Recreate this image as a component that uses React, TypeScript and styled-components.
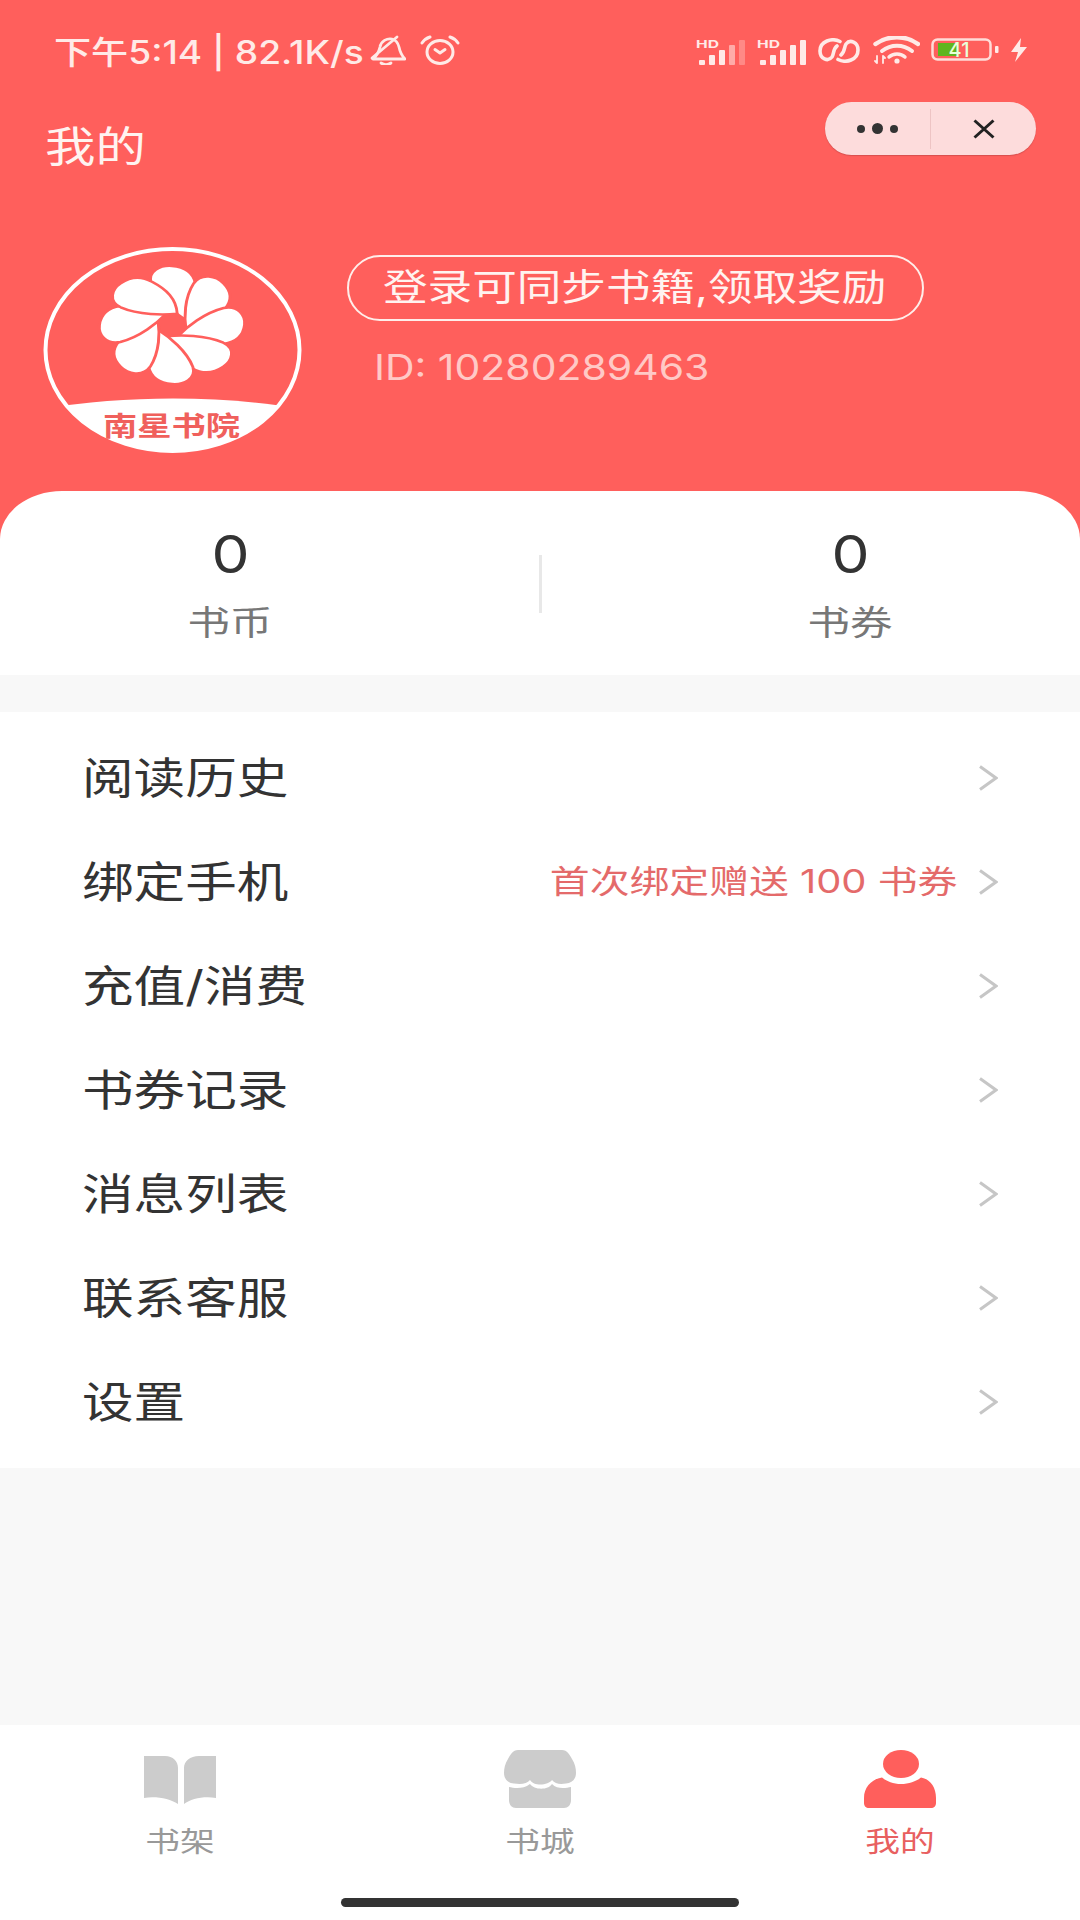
import React from 'react';
import styled, { createGlobalStyle } from 'styled-components';

const RED = '#ff5f5c';
const CJK = `"Noto Sans CJK SC", "Noto Sans", sans-serif`;
const LATIN_CJK = `Inter, "Noto Sans CJK SC", sans-serif`;

const GlobalStyle = createGlobalStyle`
  html, body {
    margin: 0;
    padding: 0;
    background: #f8f8f8;
  }
  * {
    box-sizing: border-box;
  }
`;

const Page = styled.div`
  width: 1080px;
  height: 1920px;
  display: flex;
  flex-direction: column;
  background: #f8f8f8;
  overflow: hidden;
  font-family: ${CJK};
`;

const Hero = styled.header`
  background: ${RED};
  display: flex;
  flex-direction: column;
`;

const StatusBar = styled.div`
  height: 100px;
  padding: 0 52px 0 54px;
  display: flex;
  align-items: center;
  justify-content: space-between;
`;

const StatusGroup = styled.div<{ $gap: number }>`
  display: flex;
  align-items: center;
  gap: ${p => p.$gap}px;
`;

const StatusText = styled.span`
  display: inline-block;
  width: 302px;
  font-family: ${LATIN_CJK};
  font-size: 32px;
  font-weight: 500;
  color: #ffeae7;
  white-space: nowrap;
  transform: scaleX(1.16);
  transform-origin: left center;
`;

const NavBar = styled.div`
  height: 92px;
  padding: 0 44px 0 45px;
  display: flex;
  justify-content: space-between;
`;

const NavTitle = styled.h1`
  margin: 0;
  height: 88px;
  line-height: 88px;
  font-size: 42px;
  font-weight: 400;
  color: #fff3f0;
  transform: scaleX(1.2);
  transform-origin: left center;
`;

const Capsule = styled.div`
  margin-top: 2px;
  width: 211px;
  height: 53px;
  border-radius: 27px;
  background: #fddcdc;
  box-shadow: 0 1px 1px rgba(190, 70, 70, 0.6);
  display: grid;
  grid-template-columns: 105px 1px 1fr;
  align-items: center;
  justify-items: center;
`;

const CapsuleLine = styled.span`
  width: 1px;
  height: 40px;
  background: #eec4c4;
`;

const Dots = styled.span`
  display: flex;
  align-items: center;
  gap: 7px;
`;

const Dot = styled.i<{ $size: number }>`
  width: ${p => p.$size}px;
  height: ${p => p.$size}px;
  border-radius: 50%;
  background: #333;
`;

const Profile = styled.section`
  margin-top: 55px;
  padding: 0 0 38px 43px;
  display: flex;
  align-items: flex-start;
  gap: 45px;
`;

const ProfileInfo = styled.div`
  padding-top: 8px;
  display: flex;
  flex-direction: column;
  align-items: flex-start;
`;

const LoginPill = styled.button`
  width: 577px;
  height: 66px;
  padding: 0 0 0 34px;
  border: 2px solid #ffeeea;
  border-radius: 33px;
  background: transparent;
  text-align: left;
  font-family: ${LATIN_CJK};
  font-size: 37px;
  line-height: 60px;
  color: #fff3f0;
  white-space: nowrap;
`;

const PillText = styled.span`
  display: inline-block;
  transform: scaleX(1.205);
  transform-origin: left center;
`;

const UserId = styled.span`
  margin: 24px 0 0 27px;
  font-family: Inter, sans-serif;
  font-size: 35px;
  line-height: 44px;
  color: #ffc9c6;
  white-space: nowrap;
  transform: scaleX(1.17);
  transform-origin: left center;
`;

const StatsCard = styled.section`
  height: 184px;
  padding-top: 32px;
  border-radius: 62px 62px 0 0 / 48px 48px 0 0;
  background: #fff;
  display: grid;
  grid-template-columns: 460px 1fr 460px;
  justify-items: center;
  align-items: start;
`;

const Stat = styled.div`
  display: flex;
  flex-direction: column;
  align-items: center;
`;

const StatValue = styled.span`
  font-family: Inter, sans-serif;
  font-size: 52px;
  line-height: 64px;
  color: #333;
  transform: scaleX(1.16);
`;

const StatLabel = styled.span`
  margin-top: 12px;
  font-size: 34px;
  line-height: 44px;
  color: #777;
  transform: scaleX(1.25);
`;

const StatLine = styled.span`
  margin-top: 32px;
  width: 3px;
  height: 58px;
  background: #e8e8e8;
`;

const Menu = styled.ul`
  margin: 37px 0 0;
  padding: 14px 82px 14px 82px;
  list-style: none;
  background: #fff;
`;

const MenuRow = styled.li`
  height: 104px;
  display: flex;
  align-items: center;
  gap: 22px;
`;

const MenuLabel = styled.span`
  flex: 1;
  font-family: ${LATIN_CJK};
  font-size: 43px;
  line-height: 60px;
  color: #333;
  white-space: nowrap;
  transform: scaleX(1.2);
  transform-origin: left center;
`;

const MenuHint = styled.span`
  font-family: ${LATIN_CJK};
  font-size: 32px;
  line-height: 44px;
  color: #e46a6a;
  white-space: nowrap;
  transform: scaleX(1.245);
  transform-origin: right center;
`;

const Filler = styled.div`
  flex: 1;
`;

const TabBar = styled.nav`
  height: 195px;
  padding-top: 25px;
  background: #fff;
  display: flex;
  flex-direction: column;
  align-items: center;
`;

const TabRow = styled.div`
  width: 100%;
  display: grid;
  grid-template-columns: repeat(3, 1fr);
`;

const Tab = styled.div`
  display: flex;
  flex-direction: column;
  align-items: center;
`;

const TabIcon = styled.div`
  height: 58px;
  display: flex;
  align-items: flex-end;
`;

const TabLabel = styled.span<{ $active?: boolean }>`
  margin-top: 14px;
  font-size: 28px;
  line-height: 36px;
  color: ${p => (p.$active ? '#e86060' : '#999')};
  transform: scaleX(1.24);
`;

const HomeBar = styled.div`
  margin-top: 40px;
  width: 398px;
  height: 9px;
  border-radius: 5px;
  background: #333;
`;

const Signal = ({ faded }: { faded?: boolean }) => (
  <svg width="50" height="30" viewBox="0 -4 50 30">
    <text x="0" y="9" fontFamily="Inter, sans-serif" fontSize="11" fontWeight="700" fill="#ffeae7" textLength="23" lengthAdjust="spacingAndGlyphs">HD</text>
    <rect x="3" y="21" width="6" height="5" rx="1" fill="#ffeae7" />
    <rect x="13" y="16" width="6" height="10" rx="1" fill="#ffeae7" />
    <rect x="23" y="11" width="6" height="15" rx="1" fill="#ffeae7" />
    <rect x="33" y="6" width="6" height="20" rx="1" fill="#ffeae7" opacity={faded ? 0.55 : 1} />
    <rect x="43" y="1" width="6" height="25" rx="1" fill="#ffeae7" opacity={faded ? 0.3 : 1} />
  </svg>
);

const LinkIcon = () => (
  <svg width="42" height="25" viewBox="0 0 42 25" fill="none" stroke="#ffeae7" strokeWidth="3.6" strokeLinecap="round">
    <path d="M22 3.5C14 -0.5 2 3 2 13C2 21 10 24 14 19C16 16 15 11 19 8" />
    <path d="M20 21.5C28 25.5 40 22 40 12C40 4 32 1 28 6C26 9 27 14 23 17" />
  </svg>
);

const WifiIcon = () => (
  <svg width="49" height="28" viewBox="-3 0 49 28" fill="none" stroke="#ffeae7" strokeLinecap="round">
    <path d="M1.5 8C14 -1 32 -1 44 8" strokeWidth="4.4" />
    <path d="M8 15C17 8 29 8 38 15" strokeWidth="4" />
    <path d="M15 21C19 17 27 17 31 21" strokeWidth="3.4" />
    <circle cx="23" cy="25" r="2.6" fill="#ffeae7" stroke="none" />
    <path d="M3 20V27M1 25L3 27M9 27V20M9 20L11 22" strokeWidth="1.8" />
  </svg>
);

const Battery = () => (
  <svg width="68" height="24" viewBox="0 0 68 24">
    <rect x="1.5" y="1.5" width="58" height="20" rx="5" fill="none" stroke="#ffdcd8" strokeWidth="2.5" />
    <rect x="7" y="5" width="20" height="13" fill="#5fb51f" />
    <rect x="64" y="8" width="3.5" height="7" rx="1" fill="#ffeae7" />
    <text x="28" y="19" textAnchor="middle" fontFamily="Inter, sans-serif" fontSize="20" fontWeight="500" fill="#e9ffd8">41</text>
  </svg>
);

const Bolt = () => (
  <svg width="18" height="24" viewBox="0 0 18 24">
    <path d="M11 0L1 14H8L5 24L17 9H10Z" fill="#ffeae7" />
  </svg>
);

const MutedBell = () => (
  <svg width="36" height="30" viewBox="0 0 36 30" fill="none" stroke="#ffeae7" strokeWidth="2.8" strokeLinecap="round" strokeLinejoin="round">
    <path d="M3 24C8 20 9 16 10 12C11 6 17 3 22 4C26 5 28 8 29 12C30 17 32 21 35 24H3" />
    <path d="M2 23L27 2" />
    <path d="M11 28C14 30 18 30 21 28" />
  </svg>
);

const AlarmClock = () => (
  <svg width="40" height="30" viewBox="0 0 40 30" fill="none" stroke="#ffeae7" strokeWidth="3" strokeLinecap="round" strokeLinejoin="round">
    <ellipse cx="20" cy="17" rx="13" ry="11.5" />
    <path d="M15 14.5L20 18L25 14.5" />
    <path d="M2 8C4 5 7 3 10 2" />
    <path d="M38 8C36 5 33 3 30 2" />
  </svg>
);

const Close = () => (
  <svg width="24" height="24" viewBox="0 0 24 24" fill="none" stroke="#222" strokeWidth="3">
    <path d="M2.5 3.5L21.5 20.5M21.5 3.5L2.5 20.5" />
  </svg>
);

const Chevron = () => (
  <svg width="19" height="26" viewBox="0 0 19 26" fill="none" stroke="#c6c6c6" strokeWidth="3">
    <path d="M1 1.5L17 13L1 24.5" />
  </svg>
);

const PETALS = [0, 45, 90, 135, 180, 225, 270, 315];

const Logo = () => (
  <svg width="259" height="206" viewBox="0 0 259 206">
    <defs>
      <clipPath id="logoClip">
        <ellipse cx="129.5" cy="103" rx="127" ry="101" />
      </clipPath>
    </defs>
    <ellipse cx="129.5" cy="103" rx="127" ry="101" fill={RED} stroke="#fff" strokeWidth="4" />
    <g transform="translate(129 78) scale(1.23 1)">
      {PETALS.map(a => (
        <path
          key={a}
          transform={`rotate(${a})`}
          d="M11 -5C2 -12 -12 -26 -17 -42C-20 -54 -9 -60 0 -59C10 -58 17 -53 19 -42C22 -28 21 -16 11 -5Z"
          fill="#fff"
          stroke={RED}
          strokeWidth="2.4"
        />
      ))}
    </g>
    <path d="M0 162C80 148 180 148 259 162V206H0Z" fill="#fff" clipPath="url(#logoClip)" />
    <text
      x="60"
      y="189"
      textLength="137"
      lengthAdjust="spacingAndGlyphs"
      fontFamily={CJK}
      fontSize="27"
      fontWeight="700"
      fill="#f0605c"
    >
      南星书院
    </text>
  </svg>
);

const BookIcon = () => (
  <svg width="72" height="58" viewBox="0 -6 72 58" fill="#ccc">
    <path d="M0 0H21C29 0 34 5 34 12V48C26 43 13 40 0 42Z" />
    <path d="M72 0H55C46 0 40 5 40 12V48C47 43 59 40 72 42Z" />
  </svg>
);

const StoreIcon = () => (
  <svg width="72" height="58" viewBox="0 0 72 58" fill="#ccc">
    <path d="M14 0H58C63 0 66 5 68 9C71 14 72 18 72 23C72 29 68 33 62 33.5C56 34.5 51 34 48 30C45 35 30 37 26 30C23 34 17 34.5 10 33.5C4 33 0 29 0 23C0 18 1 14 4 9C6 5 9 0 14 0Z" />
    <path d="M5 37C10 38 19 39.5 26 34C30 40 44 40.5 48 34C53 39.5 62 38 67 37V50C67 55 64 58 60 58H12C8 58 5 55 5 50Z" />
  </svg>
);

const PersonIcon = () => (
  <svg width="72" height="58" viewBox="0 0 72 58" fill={RED}>
    <ellipse cx="37" cy="14" rx="18" ry="14" />
    <path d="M0 48C0 37 8 29 18 27.5C22 31 29 34 37 34C45 34 53 31 57 27.5C66 29 72 37 72 48V53C72 56 70 58 67 58H5C2 58 0 56 0 53Z" />
  </svg>
);

const MENU = ['阅读历史', '绑定手机', '充值/消费', '书券记录', '消息列表', '联系客服', '设置'];

export default function App() {
  return (
    <>
      <GlobalStyle />
      <Page>
        <Hero>
          <StatusBar>
            <StatusGroup $gap={14}>
              <StatusText>下午5:14 | 82.1K/s</StatusText>
              <MutedBell />
              <AlarmClock />
            </StatusGroup>
            <StatusGroup $gap={11}>
              <Signal faded />
              <Signal />
              <LinkIcon />
              <WifiIcon />
              <Battery />
              <Bolt />
            </StatusGroup>
          </StatusBar>
          <NavBar>
            <NavTitle>我的</NavTitle>
            <Capsule>
              <Dots>
                <Dot $size={8} />
                <Dot $size={11} />
                <Dot $size={8} />
              </Dots>
              <CapsuleLine />
              <Close />
            </Capsule>
          </NavBar>
          <Profile>
            <Logo />
            <ProfileInfo>
              <LoginPill>
                <PillText>登录可同步书籍,领取奖励</PillText>
              </LoginPill>
              <UserId>ID: 10280289463</UserId>
            </ProfileInfo>
          </Profile>
          <StatsCard>
            <Stat>
              <StatValue>0</StatValue>
              <StatLabel>书币</StatLabel>
            </Stat>
            <StatLine />
            <Stat>
              <StatValue>0</StatValue>
              <StatLabel>书券</StatLabel>
            </Stat>
          </StatsCard>
        </Hero>
        <Menu>
          {MENU.map(item => (
            <MenuRow key={item}>
              <MenuLabel>{item}</MenuLabel>
              {item === '绑定手机' && <MenuHint>首次绑定赠送 100 书券</MenuHint>}
              <Chevron />
            </MenuRow>
          ))}
        </Menu>
        <Filler />
        <TabBar>
          <TabRow>
            <Tab>
              <TabIcon>
                <BookIcon />
              </TabIcon>
              <TabLabel>书架</TabLabel>
            </Tab>
            <Tab>
              <TabIcon>
                <StoreIcon />
              </TabIcon>
              <TabLabel>书城</TabLabel>
            </Tab>
            <Tab>
              <TabIcon>
                <PersonIcon />
              </TabIcon>
              <TabLabel $active>我的</TabLabel>
            </Tab>
          </TabRow>
          <HomeBar />
        </TabBar>
      </Page>
    </>
  );
}
